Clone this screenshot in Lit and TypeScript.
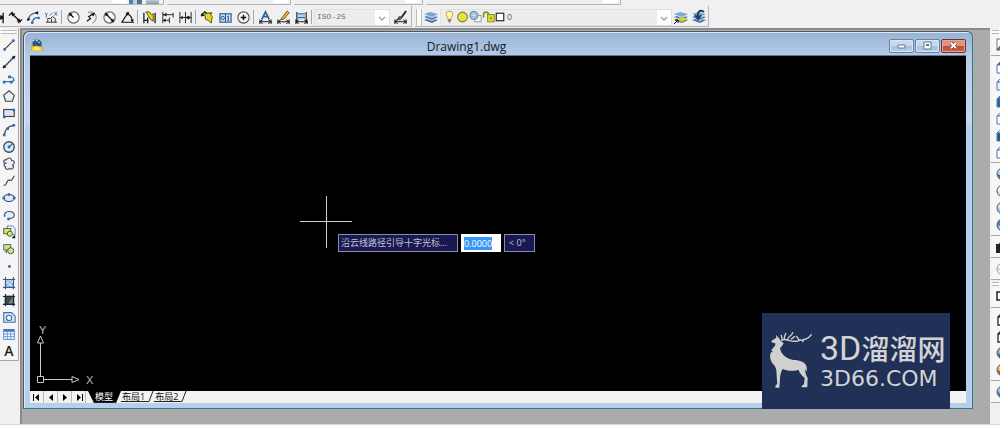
import { LitElement, html, css, svg, nothing } from "lit";
import { customElement } from "lit/decorators.js";
import { classMap } from "lit/directives/class-map.js";

const dim = svg`<path d="M2 10v5M14 10v5M2 12.5h12M5 10.5l-3 2 3 2M11 10.5l3 2-3 2" stroke="#111" fill="none"/>`;
const cube = (top: string, left: string, right: string) => svg`
  <path d="M2 6l4-4h9l-4 4z" fill="${top}" stroke="#4a78b0"/>
  <path d="M2 6h9v8H2z" fill="${left}" stroke="#4a78b0"/>
  <path d="M11 6l4-4v8l-4 4z" fill="${right}" stroke="#4a78b0"/>`;
const ball = (a: string, b: string) => svg`
  <circle cx="8" cy="8" r="6" fill="${a}" stroke="#44566b"/>
  <path d="M3 8c3 3 7 2 9-1 1 4-2 6-4 6-3 0-5-2-5-5z" fill="${b}"/>`;
const sheets = svg`
  <path d="M1 11l6-2 8 2-6 3z" fill="#4472a4"/><path d="M1 9l6-2 8 2-6 3z" fill="#d7e6f6"/>
  <path d="M1 8l6-2 8 2-6 3z" fill="#4b7cb2"/><path d="M1 6l6-2 8 2-6 3z" fill="#dbe8f7"/>
  <path d="M1 5l6-2 8 2-6 3z" fill="#7fa5d0"/>`;

const icons: Record<string, unknown> = {
  linear: svg`<path d="M3 3v11M14 3v11M3 8h11M6 6L3 8l3 2M11 6l3 2-3 2" stroke="#111" fill="none" stroke-width="1.4"/>`,
  aligned: svg`<path d="M1 6l4-4M11 14l4-4M4 4l9 8" stroke="#111" stroke-width="1.4"/><path d="M3 3l5 1-3 3zM14 13l-5-1 3-3z" fill="#111"/>`,
  arcdim: svg`<path d="M2 11C3 6 7 3 12 3M7 14c0-4 2-6 6-6" fill="none" stroke="#3b6ea5" stroke-width="1.4"/><path d="M1 12l1-4 3 2zM13 1v4l-4-2z" fill="#222"/><circle cx="6.5" cy="13.5" r="1.4" fill="#3b6ea5"/><circle cx="13.5" cy="8.5" r="1.4" fill="#3b6ea5"/>`,
  ordinate: svg`<path d="M2 13h12M4 13V9h3l2-2 3 2v4M8 13V9" fill="none" stroke="#333"/><path d="M1 3l1.500 2L4 3M2.500 5v3M6 6l3-3M11 2l3 4M14 2l-3 4" fill="none" stroke="#3b6ea5"/>`,
  radius: svg`<circle cx="8" cy="8" r="6" fill="#f8fafc" stroke="#666" stroke-width="1.2"/><path d="M8 8L4 4" stroke="#111" stroke-width="1.4"/><path d="M3 3l4 1-3 3z" fill="#111"/>`,
  jogged: svg`<path d="M4 3c5-3 9 1 9 5 0 3-2 5-4 6" fill="none" stroke="#777"/><path d="M3 12l4-3-2-2 5-3" fill="none" stroke="#111" stroke-width="1.3"/><path d="M12 3l-2 4-3-3z" fill="#111"/>`,
  diameter: svg`<circle cx="8" cy="8" r="6" fill="#f8fafc" stroke="#666" stroke-width="1.2"/><path d="M4 4l8 8" stroke="#111" stroke-width="1.4"/><path d="M3 3l4 1-3 3zM13 13l-4-1 3-3z" fill="#111"/>`,
  angular: svg`<path d="M9 2L2 13h13M7 4c4 1 6 4 6 8" fill="none" stroke="#111" stroke-width="1.2"/><path d="M6 3l4 0-2 3zM11 10h4l-2 3z" fill="#111"/>`,
  quick: svg`<path d="M2 3v11M14 3v11M6 8v6M2 11h5" stroke="#222" stroke-width="1.4"/><path d="M4 2h4l2 3 2-1v8l-3-2-3-5z" fill="#e8d517" stroke="#55500a"/>`,
  baseline: svg`<path d="M3 2v12M3 5h11M3 11h7M14 3v5M10 8v6" fill="none" stroke="#222"/><path d="M3 5l4-2v4zM3 11l3-2v4z" fill="#222"/>`,
  continued: svg`<path d="M2 2v12M8 2v12M14 2v12M2 8h12" stroke="#222"/><path d="M2 8l3-2v4zM8 8l3-2v4zM14 8l-3-2v4z" fill="#222"/>`,
  leader: svg`<path d="M1 6l4-4 3 2 5-1" fill="none" stroke="#222" stroke-width="1.3"/><path d="M5 4l5-1 3 4-1 7-3-3-3-1z" fill="#e8d517" stroke="#55500a"/><path d="M1 7l1-4 3 3z" fill="#111"/>`,
  tolerance: svg`<rect x="2" y="4" width="12" height="9" fill="#cfe0f2" stroke="#3b6ea5" stroke-width="1.400"/><path d="M8 4v9M11 6v5M10 7h1M10 11h2" stroke="#1f4f87"/><circle cx="5" cy="8.500" r="1.800" fill="none" stroke="#1f4f87"/>`,
  center: svg`<circle cx="8" cy="8" r="6" fill="#fafafa" stroke="#555" stroke-width="1.200"/><path d="M8 5v6M5 8h6" stroke="#111" stroke-width="1.600"/>`,
  dimtext: svg`<path d="M4 10l4-8 4 8M6 7h5" fill="none" stroke="#2a64a0" stroke-width="1.800"/>${dim}`,
  dimedit: svg`<path d="M5 10l7-9 2 2-6 7z" fill="#e2b93a" stroke="#7a4e10"/>${dim}`,
  dimupdate: svg`<rect x="4" y="4" width="8" height="6" fill="#b4cdea"/><path d="M4 4h8M4 8h8" stroke="#2a64a0"/><path d="M3 2v12M13 2v12" stroke="#222" stroke-width="1.200"/>${dim}`,
  dimstyle: svg`<path d="M14 1L9 8" stroke="#222" stroke-width="2"/><path d="M7 6l3 2-2 3H3z" fill="#555"/>${dim}`,
  layers: sheets,
  layermove: svg`${sheets}<path d="M3 10l6-2 6 2-6 3z" fill="#d6cc35"/><path d="M1 15l4-4M2 11h3v3" stroke="#111" fill="none"/>`,
  layerback: svg`${sheets}<path d="M13 3C9 0 6 3 7 8M4 6l3 4 3-4" stroke="#1d3c66" fill="none" stroke-width="2"/>`,
  bulb: svg`<path d="M8 1C2 1 4 7 6 9v2h4V9c2-2 4-8-2-8z" fill="#fff6a8" stroke="#ab9a38"/><path d="M6 12h4M7 14h2" stroke="#555" stroke-width="1.500"/>`,
  sun: svg`<circle cx="8" cy="8" r="6" fill="#e6e437" stroke="#77803c" stroke-width="1.300"/>`,
  freeze: svg`<rect x="7" y="6" width="8" height="8" fill="#eef3f8" stroke="#7a92aa"/><circle cx="6" cy="6" r="5" fill="#9db9c9" stroke="#5f8196"/><path d="M6 3v6M3 6h6" stroke="#dce8ee"/>`,
  lock: svg`<path d="M2 9V5c0-4 6-4 6 0v3" fill="none" stroke="#8c9312" stroke-width="2"/><rect x="7" y="5" width="8" height="9" fill="#dfe024" stroke="#777b10"/><path d="M11 8v3" stroke="#333"/>`,
  swatch: svg`<rect x="3" y="3" width="10" height="10" fill="#fff" stroke="#222" stroke-width="1.500"/>`,
  line: svg`<path d="M3 13L13 3" stroke="#333" stroke-width="1.300"/><path d="M2 12h2v2H2zM12 2h2v2h-2z" fill="#2f6fae" stroke="#2f6fae"/>`,
  xline: svg`<path d="M1 15L15 1" stroke="#222" stroke-width="1.500"/><path d="M5 9h2v2H5zM10 4h2v2h-2z" fill="#2f6fae"/><path d="M1 15l1-4 3 3zM15 1l-1 4-3-3z" fill="#111"/>`,
  pline: svg`<path d="M3 11h9c3-2 1-6-3-5" fill="none" stroke="#3f79b5" stroke-width="1.500"/><path d="M1 10h3v3H1zM9 10h3v3H9zM7 4h3v3H7z" fill="#2f6fae"/>`,
  polygon: svg`<path d="M8 2l6 5-2 7H4L2 7z" fill="#e5edf6" stroke="#444" stroke-width="1.300"/>`,
  rect: svg`<rect x="2" y="4" width="12" height="8" fill="#d8e6f4" stroke="#444" stroke-width="1.300"/><path d="M1 11h3v3H1zM12 3h3v3h-3z" fill="#2f6fae"/>`,
  arc: svg`<path d="M3 13C3 8 7 3 13 3" fill="none" stroke="#444" stroke-width="1.300"/><path d="M1 12h3v3H1zM5 5h3v3H5zM12 1h3v3h-3z" fill="#2f6fae"/>`,
  circle: svg`<circle cx="8" cy="8" r="6" fill="#dce9f6" stroke="#34495e" stroke-width="1.500"/><path d="M8 8l4-4" stroke="#2f6fae" stroke-width="1.500"/><circle cx="8" cy="8" r="1.700" fill="#2f6fae"/>`,
  cloud: svg`<path d="M5 7C1 8 1 3 5 3c2-3 6-2 6 1 4 0 4 4 1 5 3 3-1 6-3 4-2 2-6 1-5-2-3-1-2-4 1-4z" fill="#e9eff5" stroke="#445" stroke-width="1.200"/>`,
  spline: svg`<path d="M2 13c4 1 3-7 6-6s4-1 6-5" fill="none" stroke="#444" stroke-width="1.300"/>`,
  ellipse: svg`<ellipse cx="8" cy="8" rx="6" ry="4" fill="#dce9f6" stroke="#34495e" stroke-width="1.300"/><path d="M7 3h2v2H7zM1 7h2v2H1zM13 7h2v2h-2z" fill="#2f6fae" stroke="#2f6fae"/>`,
  ellarc: svg`<path d="M3 9C1 3 14 2 14 8c0 3-3 4-6 4" fill="#e5edf6" stroke="#456" stroke-width="1.300"/><path d="M6 11h3v3H6zM2 8h2v2H2z" fill="#2f6fae"/>`,
  insert: svg`<path d="M6 1h6l3 3v7H6z" fill="#e8f1fa" stroke="#5a80aa"/><rect x="2" y="4" width="8" height="6" fill="#dcdf79" stroke="#4f5a20"/><circle cx="9" cy="10" r="3" fill="#dcdf79" stroke="#2f5c30"/><path d="M15 11v4h-4z" fill="#111"/>`,
  block: svg`<rect x="2" y="3" width="8" height="6" fill="#dcdf79" stroke="#3c5c7c"/><circle cx="10" cy="10" r="3.500" fill="#dcdf79" stroke="#2f5c30"/><path d="M3 11h3M5 9v4" stroke="#2f6fae"/>`,
  point: svg`<path d="M7 7h3v3H7z" fill="#2f6fae"/>`,
  hatch: svg`<rect x="4" y="4" width="9" height="9" fill="#d6e6f6"/><path d="M4 8l4-4M4 12l8-8M8 13l5-5M4 8l5 5M6 4l7 7" stroke="#76a0cb"/><path d="M1 4h14M1 13h14M4 1v14M13 1v14" stroke="#2c5c91" stroke-width="1.300"/>`,
  gradient: svg`<rect x="3" y="3" width="11" height="10" fill="#3e4a4c"/><path d="M7 12l6-8v8z" fill="#85886d"/><path d="M1 4h14M1 13h14M4 1v14M13 1v14" stroke="#16293f" stroke-width="1.300"/>`,
  region: svg`<path d="M2 3h9l4 4v7H2z" fill="#d6e6f6" stroke="#3f74ab" stroke-width="1.300"/><circle cx="8" cy="9" r="3" fill="#f6fafd" stroke="#3f74ab" stroke-width="1.300"/>`,
  table: svg`<rect x="2" y="3" width="12" height="11" fill="#fff" stroke="#3f74c0"/><path d="M2 4h12" stroke="#3f74c0" stroke-width="3"/><path d="M2 8h12M2 11h12M6 4v10M10 4v10" stroke="#5f92d8"/>`,
  named: svg`<rect x="2" y="2" width="13" height="11" fill="#fff" stroke="#777"/><path d="M2 13l5-6 7 7" fill="#8a7a55" stroke="#333"/>`,
  vtop: cube("#2f6bb0", "#fff", "#fff"),
  vbottom: cube("#fff", "#e6eef8", "#fff"),
  vleft: cube("#3a70ad", "#2f629c", "#3a70ad"),
  vright: cube("#fff", "#fff", "#c7daf0"),
  vfront: cube("#fff", "#24588f", "#fff"),
  vback: cube("#eef4fb", "#fff", "#fff"),
  sw: ball("#b9d4ee", "#24588f"),
  se: ball("#eef4fb", "#c7d5e4"),
  ne: ball("#d5e4f4", "#8fb1d5"),
  nw: ball("#4f84c0", "#b9d4ee"),
  camera: svg`<path d="M1 5h3l1-2h5l1 2h4v9H1z" fill="#222"/><circle cx="9" cy="9" r="3" fill="#999"/>`,
  orbit: svg`<circle cx="8" cy="8" r="6" fill="#f4f8fc" stroke="#7c9cc0"/><path d="M2 8h12M8 2v12" stroke="#9db7d3"/>`,
  wire2d: svg`<path d="M2 3h13v8H2zM6 11v4h6" fill="#fff" stroke="#222" stroke-width="1.500"/>`,
  wire3d: svg`<path d="M3 6l3-3h9M3 6h9v8H3z" fill="#fff" stroke="#333" stroke-width="1.400"/>`,
  hidden: svg`<path d="M3 6l3-3h9M3 6h9v8H3z" fill="#fdfdfd" stroke="#333" stroke-width="1.400"/>`,
  real: ball("#8fb6dc", "#2c5d92"),
  concept: ball("#f3c744", "#8b3f86"),
  manage: ball("#9fc0e0", "#3b6895"),
  appicon: svg`<path d="M1 6l10-1 4 9H1z" fill="#f0cf28" stroke="#c7a31c"/><path d="M2 1h8l3 3v5L2 9z" fill="#2b567f"/><path d="M2 2h2M6 2h2M9 4h2" stroke="#e6eef6" stroke-width="1.500"/><path d="M1 14l5-6 8 6z" fill="#ffe85a"/>`,
};

const glyph = (name: string) =>
  svg`<svg class="glyph" viewBox="0 0 16 16" aria-hidden="true">${icons[name]}</svg>`;

const dimensionTools = [
  "linear", "aligned", "arcdim", "ordinate", "|", "radius", "jogged", "diameter", "angular", "|",
  "quick", "baseline", "continued", "|", "leader", "tolerance", "center", "|", "dimtext", "dimedit", "dimupdate", "|",
];
const drawTools = [
  "line", "xline", "pline", "polygon", "rect", "arc", "circle", "cloud", "spline", "ellipse", "ellarc",
  "insert", "block", "point", "hatch", "gradient", "region", "table", "text",
];
const viewTools = [
  "named", "|", "vtop", "vbottom", "vleft", "vright", "vfront", "vback", "|", "sw", "se", "ne", "nw", "|", "camera", "|", "orbit",
];
const styleTools = ["wire2d", "|", "wire3d", "hidden", "real", "concept", "|", "manage"];

@customElement("app-root")
export class AppRoot extends LitElement {
  static styles = css`
    * { box-sizing: border-box; }
    :host {
      display: grid;
      grid-template-rows: 6px 22px 1fr 4px;
      min-height: 100vh;
      background: #f0f0f0;
      font: 9px/12px "Open Sans", "Noto Sans CJK SC", sans-serif;
      color: #222;
      overflow: hidden;
    }
    button, input, select { font: inherit; color: inherit; margin: 0; padding: 0; border: 0; background: none; border-radius: 0; }
    .glyph { display: block; width: 16px; height: 16px; flex: none; }
    .tool { display: grid; place-items: center; width: 18px; height: 17px; flex: none; }
    .letter { font: 600 14px/16px "Open Sans", sans-serif; }

    .strip { display: flex; overflow: hidden; }
    .bar { display: flex; align-items: flex-start; justify-content: flex-end; height: 5px; border-bottom: 1px solid #b4b4b4; border-right: 1px solid #b4b4b4; margin-right: 3px; }
    .bar.first { width: 164px; }
    .bar.second { width: 124px; }
    .bar.third { width: 129px; }
    .bar.fourth { width: 195px; }
    .well { width: 15px; height: 3px; background: #fff; margin-right: 2px; }
    .stub { width: 13px; height: 4px; margin-right: 4px; background: linear-gradient(90deg, #4f7fae 4px, #bcd0e4 4px 8px, #55718f 8px); }
    .stub.pale { background: linear-gradient(#c3ccd5, #8d99a5); }

    .toolbars { display: flex; align-items: flex-start; }
    .bar2 { display: flex; align-items: center; height: 21px; padding-top: 2px; border-bottom: 1px solid #b4b4b4; border-right: 1px solid #b4b4b4; }
    .dims { width: 412px; margin-right: 3px; }
    .dims .tool:first-child { margin-left: -12px; }
    .dims .glyph { width: 15px; height: 15px; }
    .rule { width: 1px; height: 14px; background: #a5a5a5; margin: 0 2px 0 1px; flex: none; }
    .grip { width: 6px; height: 17px; border: solid #bdbdbd; border-width: 0 1px; margin-left: 1px; background: #fafafa; flex: none; }
    .combo { display: grid; grid-template-columns: 1fr 14px; align-items: center; height: 17px; background: #ededed; border: 1px solid #e0e0e0; }
    .combo select { grid-area: 1 / 1 / 2 / 3; width: 100%; height: 15px; appearance: none; color: #6c6c6c; padding-left: 2px; outline: 0; }
    .combo .chevron { grid-area: 1 / 2; width: 14px; height: 15px; background: #fff; pointer-events: none; }
    .styles { width: 76px; margin-right: 1px; font: 8px/12px "Liberation Mono", monospace; }
    .layer { width: 232px; grid-template-columns: 60px 1fr 14px; font-family: "Liberation Sans", sans-serif; }
    .layer .states { grid-area: 1 / 1; display: flex; padding-left: 2px; pointer-events: none; }
    .layer .states .glyph { width: 13px; height: 14px; }
    .layer .states .glyph:last-child { width: 12px; margin-left: -1px; }
    .layer select { grid-area: 1 / 1 / 2 / 4; padding-left: 66px; }
    .layer .chevron { grid-area: 1 / 3; }

    .desk { display: grid; grid-template-columns: 20px minmax(0, 1fr) 10px; min-height: 396px; position: relative; }
    .side { align-self: start; border-right: 1px solid #a8a8a8; border-bottom: 1px solid #a8a8a8; background: #f5f5f5; padding: 2px 0 1px; width: 19px; }
    .side .tool { width: 18px; }
    .side .glyph { width: 14px; height: 14px; }
    .vgrip { height: 4px; border: solid #b8b8b8; border-width: 1px 0; margin: 0 1px 2px; background: #fcfcfc; }
    .views { overflow: hidden; padding: 2px 0 0 1px; }
    .views .panel { border-bottom: 1px solid #a8a8a8; margin-bottom: 2px; padding-bottom: 2px; background: #f7f7f7; }
    .views .tool { margin-left: 3px; }
    .hrule { height: 1px; background: #a8a8a8; margin: 2px 0; }

    .mdi { display: flex; background: #ababab; border: solid #8a8a8a; border-width: 2px 0 0 2px; padding: 1px 17px 15px 1px; }
    .window {
      flex: 1; display: flex; flex-direction: column; min-width: 0;
      border: 1px solid #47586b; border-right-color: #2c7d86; border-bottom-color: #2c7d86;
      border-radius: 6px 6px 0 0; padding: 0 6px 5px;
      background: linear-gradient(#97b3d5, #b5cce8 25px, #c3d7ef 90px, #b7cfea 96px);
      box-shadow: inset 1px 1px 0 #dce8f5;
    }
    .title { display: flex; align-items: center; height: 24px; border-bottom: 1px solid #62758c; }
    .title .glyph { width: 13px; height: 13px; margin: 4px 0 0 1px; }
    .name { flex: 1; text-align: center; font: 12px/20px "Open Sans", sans-serif; color: #14202e; margin: 6px 0 0; }
    .controls { display: flex; gap: 1px; }
    .ctl { display: grid; place-items: center; width: 25px; height: 14px; border: 1px solid #6781a0; border-radius: 2px; background: linear-gradient(#c8d9ec 50%, #a5c0de 50%, #b7cee8); box-shadow: inset 0 0 0 1px #d8e5f3; margin-top: 4px; }
    .ctl.close { border-color: #742f2a; background: linear-gradient(#dc9384 50%, #bf4531 50%, #d0674c); box-shadow: inset 0 0 0 1px #e2a699; }
    .ctl svg { display: block; width: 11px; height: 9px; }

    .canvas { flex: 1; position: relative; background: #000; min-height: 335px; overflow: hidden; }
    .cross { position: absolute; left: 270px; top: 140px; width: 52px; height: 52px; }
    .ucs { position: absolute; left: 7px; bottom: 4px; width: 60px; height: 64px; font: 12px "Liberation Sans", sans-serif; }
    .prompt { position: absolute; left: 308px; top: 178px; display: flex; gap: 3px; color: #c3c3d4; }
    .prompt label, .prompt output { height: 18px; line-height: 16px; border: 1px solid #8989b0; background: #191952; padding: 0 2px; white-space: nowrap; }
    .prompt label { width: 120px; }
    .prompt output { width: 31px; padding-left: 4px; }
    .prompt input { width: 40px; height: 18px; background: #fff; padding: 0 3px; outline: 0; color: #222; line-height: 13px; }
    .prompt input::selection { background: #3796f6; color: #fff; }

    .tabs { display: flex; height: 12px; background: #f2f2f2; overflow: hidden; }
    .nav { width: 14px; height: 12px; border-right: 1px solid #bbb; display: grid; place-items: center; }
    .nav svg { display: block; width: 10px; height: 9px; }
    .tab { height: 11px; line-height: 11px; white-space: nowrap; color: #111; border-bottom: 1px solid #222; padding: 0 3px 0 1px; }
    .tab.on { background: #000; color: #fff; height: 12px; margin-left: 2px; padding: 0 8px 0 7px; clip-path: polygon(0 0, 100% 0, calc(100% - 5px) 100%, 6px 100%); }
    .slant { width: 6px; height: 11px; flex: none; }

    .brand { position: absolute; right: 50px; bottom: 15px; width: 188px; height: 96px; background: #213056; color: #d3d3d3; display: flex; align-items: center; gap: 7px; padding: 0 0 2px 6px; }
    .deer { width: 45px; height: 58px; flex: none; }
    .words { display: grid; gap: 3px; }
    .big { display: flex; align-items: center; font: 28px/34px "Noto Sans CJK SC", sans-serif; white-space: nowrap; font-weight: 500; }
    .big .latin { font: 34px/34px Roboto, sans-serif; }
    .small { font: 22px/22px "DejaVu Sans", sans-serif; white-space: nowrap; }
    .foot { background: #fafafa; border-top: 1px solid #d9d9d9; }
  `;

  firstUpdated() {
    this.renderRoot.querySelector<HTMLInputElement>(".prompt input")?.select();
  }

  private tool(name: string) {
    return html`<button class="tool" aria-label=${name}>${name === "text" ? html`<span class="letter">A</span>` : glyph(name)}</button>`;
  }

  private tools(names: string[], rule: string) {
    return names.map((n) => (n === "|" ? html`<div class=${rule}></div>` : this.tool(n)));
  }

  private chevron() {
    return html`<svg class="chevron" viewBox="0 0 14 15" aria-hidden="true"><path d="M4 7l3 3 3-3" fill="none" stroke="#a0a0a0" stroke-width="1.3" /></svg>`;
  }

  private nav(label: string, d: string) {
    return html`<button class="nav" aria-label=${label}><svg viewBox="0 0 10 9"><path d=${d} fill="#000" /></svg></button>`;
  }

  private tab(label: string, on = false) {
    return html`<button class=${classMap({ tab: true, on })}>${label}</button>${on
      ? nothing
      : html`<svg class="slant" viewBox="0 0 6 11" aria-hidden="true"><path d="M0 10.5h1L5 0" fill="none" stroke="#222" /></svg>`}`;
  }

  render() {
    return html`
      <div class="strip">
        <div class="bar first"><div class="well"></div><div class="stub"></div><div class="stub pale"></div></div>
        <div class="bar second"><div class="well"></div></div>
        <div class="bar third"><div class="well"></div></div>
        <div class="bar fourth"><div class="well"></div></div>
      </div>
      <div class="toolbars">
        <div class="bar2 dims">
          ${this.tools(dimensionTools, "rule")}
          <div class="combo styles">
            <select aria-label="Dimension style"><option>ISO-25</option></select>${this.chevron()}
          </div>
          ${this.tool("dimstyle")}
        </div>
        <div class="bar2">
          <div class="grip"></div>
          ${this.tool("layers")}
          <div class="combo layer">
            <select aria-label="Layer"><option>0</option></select>
            <div class="states">${["bulb", "sun", "freeze", "lock", "swatch"].map(glyph)}</div>
            ${this.chevron()}
          </div>
          ${this.tool("layermove")}${this.tool("layerback")}
        </div>
      </div>
      <div class="desk">
        <div class="side"><div class="vgrip"></div>${this.tools(drawTools, "hrule")}</div>
        <main class="mdi">
          <section class="window">
            <header class="title">
              ${glyph("appicon")}
              <h1 class="name">Drawing1.dwg</h1>
              <div class="controls">
                <button class="ctl" aria-label="Minimize"><svg viewBox="0 0 11 9"><path d="M2 4h7v3H2z" fill="#fff" stroke="#66788c" /></svg></button>
                <button class="ctl" aria-label="Restore"><svg viewBox="0 0 11 9"><path d="M2 1h7v7H2z" fill="#fff" stroke="#66788c" /><path d="M4 3h3v2H4z" fill="#5f7894" /></svg></button>
                <button class="ctl close" aria-label="Close"><svg viewBox="0 0 11 9"><path d="M3 2l5 5M8 2L3 7" stroke="#7b3a38" stroke-width="3.4" /><path d="M3 2l5 5M8 2L3 7" stroke="#fff" stroke-width="2" /></svg></button>
              </div>
            </header>
            <div class="canvas">
              <svg class="cross" viewBox="0 0 52 52"><path d="M26.5 0v52M0 25.5h52" stroke="#d0d0c8" /></svg>
              <div class="prompt">
                <label for="distance">沿云线路径引导十字光标...</label>
                <input id="distance" value="0.0000" />
                <output>&lt; 0°</output>
              </div>
              <svg class="ucs" viewBox="0 0 60 64">
                <g fill="none" stroke="#c8c8c8"><path d="M0.500 53.500h6v6h-6zM3.500 53V20M7 56.500h28M3.500 13l-3 7h6zM42 56.500l-7-3v6z" /></g>
                <text x="2" y="11" font-size="11" fill="#b8b8b8">Y</text>
                <text x="49" y="61" font-size="11" fill="#b8b8b8">X</text>
              </svg>
            </div>
            <div class="tabs">
              ${this.nav("First", "M1 1h1v7H1zM7 1v7L3 4.500z")}
              ${this.nav("Previous", "M7 1v7L3 4.500z")}
              ${this.nav("Next", "M3 1v7l4-3.500z")}
              ${this.nav("Last", "M8 1h1v7H8zM3 1v7l4-3.500z")}
              ${this.tab("模型", true)}${this.tab("布局1")}${this.tab("布局2")}
            </div>
          </section>
        </main>
        <div class="views">
          <div class="panel"><div class="vgrip"></div>${this.tools(viewTools, "hrule")}</div>
          <div class="panel"><div class="vgrip"></div>${this.tools(styleTools, "hrule")}</div>
        </div>
        <div class="brand">
          <svg class="deer" viewBox="36 75 135 174" aria-hidden="true">
            <path fill="#d0d0ce" d="M46 105l10-7 5-2-1-9 9 9 5 10 9 5-5 9-6 6c2 16 16 32 40 36 20 0 38 6 40 22l1 13-6-7c1 11 3 19 8 25l-1 29h-17v-5l7-4 2-19c-10-9-16-17-19-25-15 6-35 4-47-2-6 10-8 22-8 30l-2 26H58l1-7 5-4-2-23c0-17-2-27-8-34-10-10-14-24-10-36l7-6-6-1 11-14c4-6 3-9-2-9l-7-2z" />
            <path fill="none" stroke="#d0d0ce" stroke-width="4" stroke-linecap="round" d="M76 104c5-5 13-4 22-1s22 5 32 0c16 0 28-6 36-17M79 102l-3-14M86 100c-4-8 2-10 3-18M95 100c2-10 12-8 15-20M106 99l10-7M130 103l-8-12M145 99l-5 8M133 102c-6 2-10 6-18 3" />
          </svg>
          <div class="words">
            <div class="big"><span class="latin">3D</span>溜溜网</div>
            <div class="small">3D66.COM</div>
          </div>
        </div>
      </div>
      <footer class="foot"></footer>
    `;
  }
}
